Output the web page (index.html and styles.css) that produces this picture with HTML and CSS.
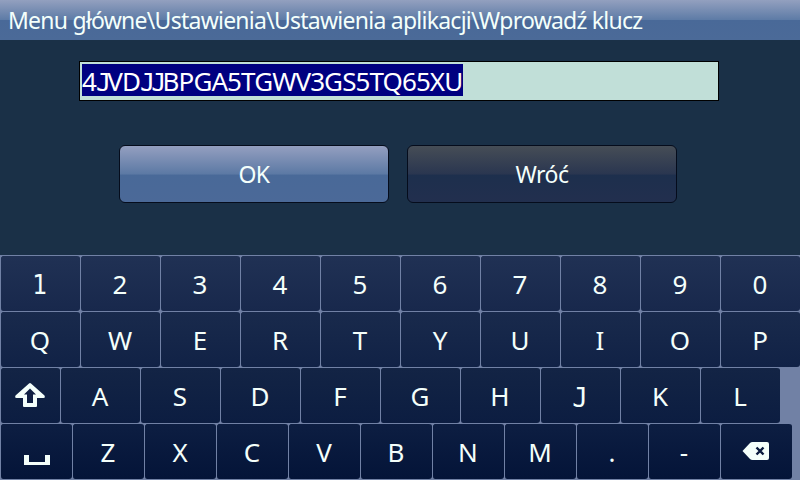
FILE: index.html
```
<!DOCTYPE html>
<html lang="pl">
<head>
    <meta charset="UTF-8">
    <title>Wprowadź klucz</title>
    <link rel="stylesheet" href="styles.css">
</head>
<body>
    <div class="titlebar"><span class="titletext">Menu główne\Ustawienia\Ustawienia aplikacji\Wprowadź klucz</span></div>

    <div class="content">
        <div class="keyinput"><span class="selected">4<span class="barj">J</span>VD<span class="barj">JJ</span>BPGA5TGWV3GS5TQ65XU</span></div>
        <div class="buttons">
            <div class="btn btn_ok">OK</div>
            <div class="btn btn_back">Wróć</div>
        </div>
    </div>

    <div class="keyboard">
        <div class="row row1">
            <div class="key key_one">1</div>
            <div class="key">2</div>
            <div class="key">3</div>
            <div class="key">4</div>
            <div class="key">5</div>
            <div class="key">6</div>
            <div class="key">7</div>
            <div class="key">8</div>
            <div class="key">9</div>
            <div class="key">0</div>
        </div>
        <div class="row row2">
            <div class="key">Q</div>
            <div class="key">W</div>
            <div class="key">E</div>
            <div class="key">R</div>
            <div class="key">T</div>
            <div class="key">Y</div>
            <div class="key">U</div>
            <div class="key">I</div>
            <div class="key">O</div>
            <div class="key">P</div>
        </div>
        <div class="row row3">
            <div class="key key_shift">
                <svg width="60" height="56" viewBox="0 0 60 56">
                    <path fill="#f4fffb" fill-rule="evenodd" d="M30 16 Q30.500 16 31 16.500 L44.500 28.500 Q45.500 31 43.500 31 H37 V39 Q37 40 36 40 H24 Q23 40 23 39 V31 H16.500 Q14.500 31 15.500 28.500 L29 16.500 Q29.500 16 30 16 Z M30 21.500 L24 27.500 H27 V36 H33 V27.500 H36 Z"/>
                </svg>
            </div>
            <div class="key">A</div>
            <div class="key">S</div>
            <div class="key">D</div>
            <div class="key">F</div>
            <div class="key">G</div>
            <div class="key">H</div>
            <div class="key key_j">J</div>
            <div class="key">K</div>
            <div class="key">L</div>
        </div>
        <div class="row row4">
            <div class="key">
                <svg width="72" height="56" viewBox="0 0 72 56">
                    <path fill="#f4fffb" d="M24 32 H29 V39 H45 V32 H50 V42 H24 Z"/>
                </svg>
            </div>
            <div class="key">Z</div>
            <div class="key">X</div>
            <div class="key">C</div>
            <div class="key">V</div>
            <div class="key">B</div>
            <div class="key">N</div>
            <div class="key">M</div>
            <div class="key">.</div>
            <div class="key">-</div>
            <div class="key">
                <svg width="72" height="56" viewBox="0 0 72 56">
                    <path fill="#f4fffb" d="M22.500 28 L30 20 Q31 19 32.500 19 H47 Q49 19 49 21 V35 Q49 37 47 37 H32.500 Q31 37 30 36 Z"/>
                    <path fill="none" stroke="#091a3e" stroke-width="2.400" d="M36.500 24.500 L43.500 31.500 M43.500 24.500 L36.500 31.500"/>
                </svg>
            </div>
        </div>
    </div>
</body>
</html>
```
FILE: styles.css
```
body{
    margin: 0;
    width: 800px;
    height: 480px;
    overflow: hidden;
    display: flex;
    flex-direction: column;
    background: #1a3047;
    color: #f4fffb;
    font-family: "Noto Sans", "DejaVu Sans", sans-serif;
}

.titlebar{
    height: 40px;
    line-height: 41px;
    padding-left: 8px;
    font-size: 23px;
    letter-spacing: -0.75px;
    white-space: nowrap;
    background: linear-gradient(#93a0bf, #5d7ba6 50%, #496998 50%, #4b6a98);
}

.content{
    height: 215px;
}

.keyinput{
    box-sizing: border-box;
    width: 640px;
    height: 40px;
    margin: 21px 0 0 79px;
    padding: 2px;
    border: 1px solid #000;
    background: #c1dfd8;
}

.selected{
    display: block;
    width: 381px;
    height: 32px;
    line-height: 34px;
    font-size: 26px;
    letter-spacing: -0.9px;
    white-space: nowrap;
    color: #fff;
    background: #000080;
}

.barj{
    font-family: "DejaVu Sans Mono", monospace;
    font-size: 25px;
    line-height: 1;
    letter-spacing: -3.8px;
}

.buttons{
    display: flex;
    gap: 18px;
    margin: 44px 0 0 119px;
}

.btn{
    box-sizing: border-box;
    width: 270px;
    height: 58px;
    line-height: 57px;
    border: 1px solid #050c1c;
    border-radius: 6px;
    font-size: 23px;
    letter-spacing: -0.5px;
    text-align: center;
}

.btn_ok{
    background: linear-gradient(#949fc0, #5c79a4 50%, #496998 52%, #4b6998);
}

.btn_back{
    background: linear-gradient(#464d56, #2a3650 50%, #1d2f4d 52%, #222f4e);
}

.keyboard{
    height: 225px;
    background: #7181a5;
}

.row{
    display: flex;
    height: 56px;
}

.key{
    box-sizing: border-box;
    width: 80px;
    height: 56px;
    line-height: 56px;
    padding-right: 1px;
    border: 1px solid #7181a5;
    border-right: 0;
    border-bottom: 0;
    border-radius: 3px;
    font-size: 26px;
    text-align: center;
}

.key_one{
    font-family: "DejaVu Sans Condensed", "DejaVu Sans", sans-serif;
    font-stretch: condensed;
    line-height: 59px;
}

.key_j{
    font-family: "DejaVu Sans Mono", monospace;
    line-height: 60px;
}

.key svg{
    display: block;
    margin: -1px 0 0 -1px;
}

.row1 .key{
    background: linear-gradient(#203154, #18284c);
}

.row2 .key{
    background: linear-gradient(#192a4c, #112246);
}

.row3 .key{
    background: linear-gradient(#132445, #0c1d41);
}

.row4 .key{
    width: 72px;
    background: linear-gradient(#0d1e42, #041438);
}

.row3 .key_shift{
    width: 60px;
}
```
